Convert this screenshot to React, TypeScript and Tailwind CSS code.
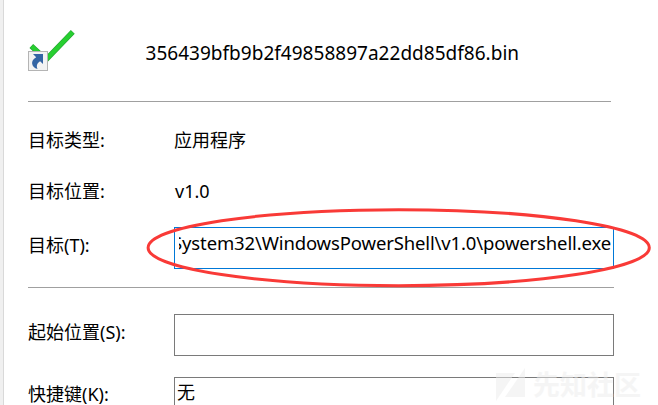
import type { ReactNode } from "react";

function Row({ label, className = "", children }: { label: string; className?: string; children: ReactNode }) {
  return (
    <div className={`flex shrink-0 ${className}`}>
      <div className="w-[146px] shrink-0 whitespace-nowrap">{label}</div>
      {children}
    </div>
  );
}

function ShortcutIcon() {
  return (
    <svg className="block h-[48px] w-[56px] shrink-0" viewBox="0 0 56 48">
      <path d="M3.3 16.9 L18 30.6 L44.8 2.9" fill="none" stroke="#27a535" strokeWidth="5.4" />
      <path d="M3.8 17.3 L18 30.6 L44.4 3.3" fill="none" stroke="#27cf30" strokeWidth="4.2" />
      <rect x="0.5" y="22.5" width="19" height="19" fill="#f3f3f3" stroke="#b4b4b4" />
      <path d="M5 25 H15 V35 L12.1 32.2 C9.3 33.8 8 36.4 9.5 39.9 C3.4 38.3 1.8 31.7 8.2 28.2 Z" fill="#3465a4" />
    </svg>
  );
}

export default function App() {
  return (
    <div className="relative flex h-[405px] w-[658px] overflow-hidden bg-white font-['Noto_Sans','Noto_Sans_CJK_SC',sans-serif] text-[18px] leading-6 text-black">
      <div className="w-1 shrink-0 border-r border-[#d9d9d9] bg-[#f0f0f0]" />
      <main className="flex flex-1 flex-col pl-6">
        <div className="flex h-[101px] shrink-0 pt-[29px]">
          <ShortcutIcon />
          <div className="ml-[61.5px] mt-[12px] whitespace-nowrap text-[19px] tracking-[0.02px]">356439bfb9b2f49858897a22dd85df86.bin</div>
        </div>
        <div className="h-px w-[583px] shrink-0 bg-[#a0a0a0]" />
        <Row label="目标类型:" className="mt-[26px]"><div>应用程序</div></Row>
        <Row label="目标位置:" className="mt-[27px]"><div className="pl-px">v1.0</div></Row>
        <div className="mt-[24px] flex h-[42px] shrink-0">
          <div className="w-[146px] shrink-0 pt-[6px]">目标(T):</div>
          <div className="h-[42px] w-[440px] border border-[#0078d7] pl-1">
            <div className="flex h-full justify-end overflow-hidden pr-[2px] pt-[3px]">
              <span className="whitespace-nowrap text-[18.5px] tracking-[-0.14px]">System32\WindowsPowerShell\v1.0\powershell.exe</span>
            </div>
          </div>
        </div>
        <div className="mt-[18px] h-px w-[586px] shrink-0 bg-[#a0a0a0]" />
        <div className="mt-[26px] flex h-[42px] shrink-0">
          <div className="w-[146px] shrink-0 pt-[6px]">起始位置(S):</div>
          <div className="h-[42px] w-[440px] border border-[#7a7a7a]" />
        </div>
        <div className="mt-[21px] flex h-[28px] shrink-0">
          <div className="w-[146px] shrink-0 pt-[7px] leading-[21px]">快捷键(K):</div>
          <div className="h-[28px] w-[440px] border border-b-0 border-[#7a7a7a] pl-[2px] pt-[3px] leading-[23px]">无</div>
        </div>
      </main>
      <svg className="pointer-events-none absolute inset-0 h-[405px] w-[658px]" viewBox="0 0 658 405">
        <ellipse cx="398.7" cy="247.7" rx="250.6" ry="38" fill="none" stroke="#f93a37" strokeWidth="3" />
      </svg>
      <div className="absolute left-[496px] top-[368px] flex text-[#ededed] opacity-50">
        <svg className="h-[34px] w-[29px] shrink-0" viewBox="0 0 29 34" fill="currentColor">
          <path d="M0 5 H19 L0 33 Z M29 0 V29 H9 Z" />
        </svg>
        <span className="ml-[8px] mt-[2px] whitespace-nowrap text-[27px] font-bold leading-[30px]">先知社区</span>
      </div>
    </div>
  );
}
